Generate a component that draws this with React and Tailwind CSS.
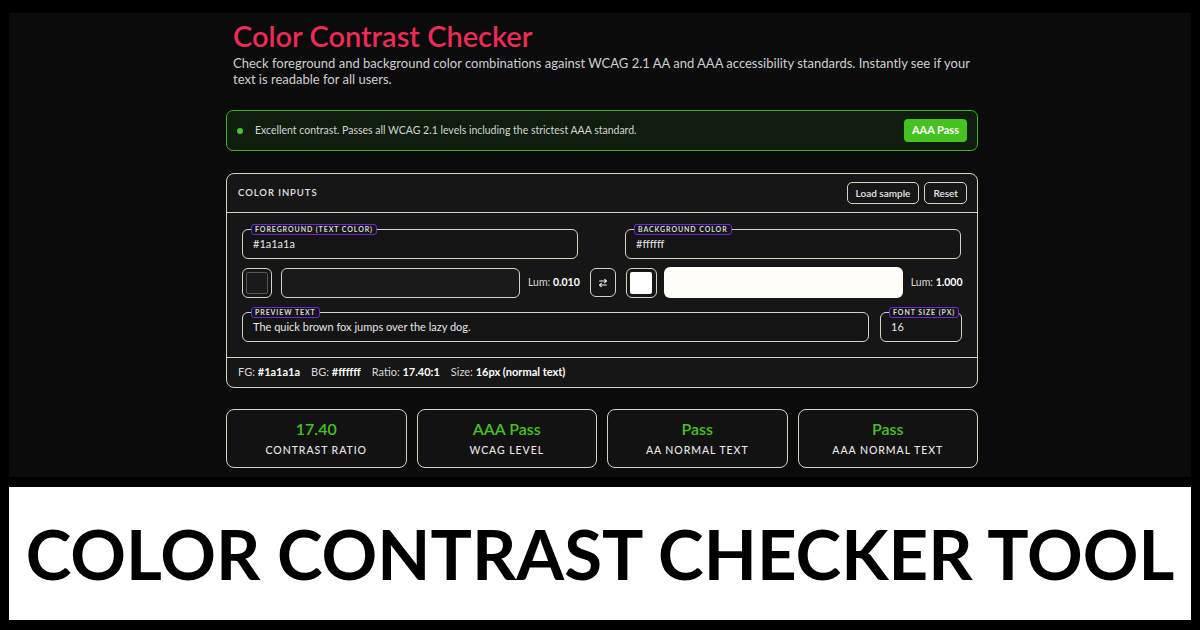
import React from 'react';
import { ArrowRightLeft } from 'lucide-react';

const font = { fontFamily: '"Lato", "Noto Sans", sans-serif' };

function Legend({ children }) {
  return (
    <span className="absolute -top-[6px] left-[8px] whitespace-nowrap rounded-[3px] border border-[#6d28d9] bg-[#161616] px-[3px] text-[7px] font-bold uppercase leading-[9px] tracking-[0.13em] text-[#d8d8d8]">
      {children}
    </span>
  );
}

function Field({ label, value, className = '' }) {
  return (
    <div className={`relative h-[30px] rounded-[6px] border-[1.5px] border-[#d8d2c2] bg-[#141414] ${className}`}>
      <Legend>{label}</Legend>
      <div className="flex h-full items-center px-[10px] text-[11px] text-[#e6e6e6]">{value}</div>
    </div>
  );
}

function Stat({ value, label }) {
  return (
    <div className="flex h-[59px] flex-col items-center justify-center rounded-[8px] border-[1.5px] border-[#d8d2c2] bg-[#121212]">
      <div className="text-[16px] font-semibold leading-[20px] text-[#45c21f]">{value}</div>
      <div className="mt-[4px] text-[10.5px] font-medium uppercase tracking-[0.09em] text-[#e8e8e8]">{label}</div>
    </div>
  );
}

export default function App() {
  return (
    <div className="flex h-[630px] w-[1200px] flex-col gap-[10px] bg-black px-[9px] pt-[13px] pb-[10px]" style={font}>
      <div className="h-[464px] shrink-0 bg-[#0b0b0b]">
        <div className="ml-[217px] w-[752px]">
          <h1 className="pt-[7px] pl-[7px] text-[29px] font-semibold leading-[32px] text-[#ec2c55]">Color Contrast Checker</h1>
          <p className="mt-[3px] pl-[7px] text-[13px] leading-[16px] text-[#cfcfcf]">
            Check foreground and background color combinations against WCAG 2.1 AA and AAA accessibility standards. Instantly see if your text is readable for all users.
          </p>

          <div className="mt-[23px] flex h-[41px] items-center rounded-[7px] border-[1.5px] border-[#3fae28] bg-[#0f1d0c] pl-[10px] pr-[10px]">
            <span className="h-[6px] w-[6px] rounded-full bg-[#4cc631]" />
            <span className="ml-[12px] text-[10.5px] text-[#d4d4d4]">
              Excellent contrast. Passes all WCAG 2.1 levels including the strictest AAA standard.
            </span>
            <span className="ml-auto rounded-[4px] bg-[#44c21f] px-[8px] py-[3px] text-[11px] font-bold text-white">AAA Pass</span>
          </div>

          <div className="mt-[22px] rounded-[8px] border-[1.5px] border-[#d8d2c2] bg-[#161616]">
            <div className="flex h-[39px] items-center border-b-[1.5px] border-[#d8d2c2] pl-[11px] pr-[10px]">
              <span className="text-[9.5px] font-semibold uppercase tracking-[0.1em] text-[#e0e0e0]">Color Inputs</span>
              <div className="ml-auto flex gap-[5px]">
                <button className="h-[22px] rounded-[5px] border-[1.5px] border-[#d8d2c2] px-[8px] text-[10px] font-semibold text-[#e6e6e6]">Load sample</button>
                <button className="h-[22px] rounded-[5px] border-[1.5px] border-[#d8d2c2] px-[8px] text-[10px] font-semibold text-[#e6e6e6]">Reset</button>
              </div>
            </div>

            <div className="px-[15px] pt-[16px] pb-[15px]">
              <div className="flex">
                <Field label="Foreground (text color)" value="#1a1a1a" className="w-[336px]" />
                <Field label="Background color" value="#ffffff" className="ml-[47px] w-[336px]" />
              </div>

              <div className="mt-[8px] flex items-center">
                <div className="flex h-[30px] w-[30px] shrink-0 items-center justify-center rounded-[6px] border-[1.5px] border-[#d8d2c2]">
                  <div className="h-[22px] w-[22px] rounded-[2px] border border-[#555] bg-[#1a1a1a]" />
                </div>
                <div className="ml-[9px] h-[30px] w-[239px] shrink-0 rounded-[6px] border-[1.5px] border-[#d8d2c2] bg-[#1a1a1a]" />
                <span className="ml-[8px] whitespace-nowrap text-[10.5px] text-[#d8d8d8]">
                  Lum: <b className="text-white">0.010</b>
                </span>
                <div className="ml-[10px] flex h-[29px] w-[26px] shrink-0 items-center justify-center rounded-[6px] border-[1.5px] border-[#d8d2c2]">
                  <ArrowRightLeft size={10} strokeWidth={2.5} className="text-white" />
                </div>
                <div className="ml-[10px] flex h-[30px] w-[31px] shrink-0 items-center justify-center rounded-[6px] border-[1.5px] border-[#d8d2c2]">
                  <div className="h-[22px] w-[22px] rounded-[2px] bg-white" />
                </div>
                <div className="ml-[7px] h-[31px] w-[239px] shrink-0 rounded-[6px] bg-[#fffdf8]" />
                <span className="ml-[8px] whitespace-nowrap text-[10.5px] text-[#d8d8d8]">
                  Lum: <b className="text-white">1.000</b>
                </span>
              </div>

              <div className="mt-[14px] flex">
                <Field label="Preview text" value="The quick brown fox jumps over the lazy dog." className="w-[627px]" />
                <Field label="Font size (px)" value="16" className="ml-[11px] w-[82px]" />
              </div>
            </div>

            <div className="flex h-[30px] items-center gap-[11px] border-t-[1.5px] border-[#d8d2c2] pl-[11px] text-[11px] text-[#d8d8d8]">
              <span>FG: <b className="text-white">#1a1a1a</b></span>
              <span>BG: <b className="text-white">#ffffff</b></span>
              <span>Ratio: <b className="text-white">17.40:1</b></span>
              <span>Size: <b className="text-white">16px (normal text)</b></span>
            </div>
          </div>

          <div className="mt-[21px] grid grid-cols-4 gap-[10px]">
            <Stat value="17.40" label="Contrast ratio" />
            <Stat value="AAA Pass" label="WCAG level" />
            <Stat value="Pass" label="AA normal text" />
            <Stat value="Pass" label="AAA normal text" />
          </div>
        </div>
      </div>

      <div className="flex flex-1 items-center justify-center bg-white">
        <span className="whitespace-nowrap text-[69px] font-bold leading-none text-black">COLOR CONTRAST CHECKER TOOL</span>
      </div>
    </div>
  );
}
